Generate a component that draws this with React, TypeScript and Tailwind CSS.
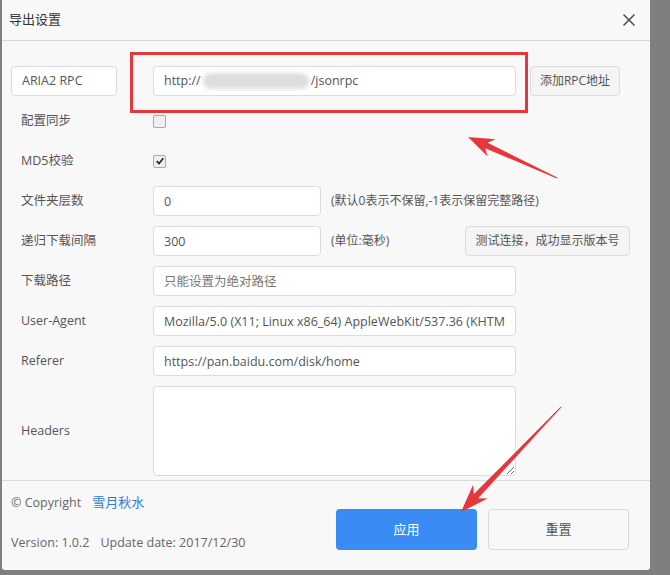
import { X } from 'lucide-react';

type Pt = [number, number];

// tapered arrow polygon: thick head at tip, thin tail
function arrowPoints(tip: Pt, tail: Pt, headLen: number, headW: number, shaftW: number) {
  const dx = tail[0] - tip[0];
  const dy = tail[1] - tip[1];
  const len = Math.hypot(dx, dy);
  const u = [dx / len, dy / len];
  const n = [-u[1], u[0]];
  const at = (d: number, w: number): string =>
    `${(tip[0] + u[0] * d + n[0] * w).toFixed(1)},${(tip[1] + u[1] * d + n[1] * w).toFixed(1)}`;
  return [
    at(0, 0),
    at(headLen, headW / 2),
    at(headLen * 0.78, shaftW / 2),
    at(len, 0.5),
    at(len, -0.5),
    at(headLen * 0.78, -shaftW / 2),
    at(headLen, -headW / 2),
  ].join(' ');
}

const inputCls =
  'h-[30px] rounded-[4px] border border-[#dcdcdc] bg-white px-[10px] text-[12.5px] text-[#555] outline-none';

function Label({ children }: { children: React.ReactNode }) {
  return <div className="w-[142px] shrink-0 pl-[10px] text-[12.5px] text-[#555]">{children}</div>;
}

function Checkbox({ checked }: { checked?: boolean }) {
  return (
    <span className="flex h-[13px] w-[13px] items-center justify-center rounded-[2px] border border-[#aaa] bg-[#f0f0f0]">
      {checked && (
        <svg viewBox="0 0 12 12" className="h-[10px] w-[10px]">
          <path d="M2 6.2 L4.8 9 L10 2.8" fill="none" stroke="#222" strokeWidth="2" />
        </svg>
      )}
    </span>
  );
}

export default function App() {
  return (
    <div className="relative h-[575px] w-[670px] overflow-hidden bg-[#7f7f7f] font-['Open_Sans','Noto_Sans_CJK_SC',sans-serif]">
      <div className="ml-[2px] flex h-[570px] w-[648px] flex-col rounded-b-[3px] bg-[#f8f8f8]">
        {/* Header */}
        <div className="flex h-[41px] shrink-0 items-center justify-between border-b border-[#d8d8d8] pl-[7px] pr-[11px]">
          <span className="text-[13px] text-[#333]">导出设置</span>
          <X className="h-[20px] w-[20px] text-[#555]" strokeWidth={2} />
        </div>

        {/* Form */}
        <div className="flex flex-col gap-[10px] pl-[9px] pr-[20px] pt-[25px]">
          <div className="flex h-[30px] items-center">
            <div className="w-[142px] shrink-0">
              <div className="flex h-[30px] w-[106px] items-center rounded-[4px] border border-[#dcdcdc] bg-white pl-[10px] text-[12.5px] text-[#555]">
                ARIA2 RPC
              </div>
            </div>
            <div className={`${inputCls} flex w-[363px] items-center`}>
              <span>http://</span>
              <span className="mx-[2px] inline-block h-[16px] w-[106px] rounded-full bg-[#dddddd] blur-[2px]" />
              <span>/jsonrpc</span>
            </div>
            <button className="ml-[14px] h-[30px] w-[90px] rounded-[4px] border border-[#dcdcdc] bg-[#f4f4f4] text-[12px] text-[#555]">
              添加RPC地址
            </button>
          </div>

          <div className="flex h-[30px] items-center">
            <Label>配置同步</Label>
            <Checkbox />
          </div>

          <div className="flex h-[30px] items-center">
            <Label>MD5校验</Label>
            <Checkbox checked />
          </div>

          <div className="flex h-[30px] items-center">
            <Label>文件夹层数</Label>
            <input className={`${inputCls} w-[168px]`} defaultValue="0" />
            <span className="ml-[10px] text-[12px] text-[#555]">(默认0表示不保留,-1表示保留完整路径)</span>
          </div>

          <div className="flex h-[30px] items-center">
            <Label>递归下载间隔</Label>
            <input className={`${inputCls} w-[168px]`} defaultValue="300" />
            <span className="ml-[10px] text-[12px] text-[#555]">(单位:毫秒)</span>
            <button className="ml-auto h-[30px] w-[165px] rounded-[4px] border border-[#dcdcdc] bg-[#f4f4f4] text-[12px] text-[#555]">
              测试连接，成功显示版本号
            </button>
          </div>

          <div className="flex h-[30px] items-center">
            <Label>下载路径</Label>
            <input className={`${inputCls} w-[363px] placeholder:text-[#777]`} placeholder="只能设置为绝对路径" />
          </div>

          <div className="flex h-[30px] items-center">
            <Label>User-Agent</Label>
            <input
              className={`${inputCls} w-[363px]`}
              defaultValue="Mozilla/5.0 (X11; Linux x86_64) AppleWebKit/537.36 (KHTML, like Gecko) Chrome/63.0.3239.84 Safari/537.36"
            />
          </div>

          <div className="flex h-[30px] items-center">
            <Label>Referer</Label>
            <input className={`${inputCls} w-[363px]`} defaultValue="https://pan.baidu.com/disk/home" />
          </div>

          <div className="flex h-[90px] items-center">
            <Label>Headers</Label>
            <textarea className="h-[90px] w-[363px] rounded-[4px] border border-[#dcdcdc] bg-white px-[10px] py-[6px] text-[12.5px] text-[#555] outline-none" />
          </div>
        </div>

        {/* Footer */}
        <div className="mt-[4px] flex flex-1 border-t border-[#dcdcdc] pl-[9px]">
          <div className="flex w-[325px] flex-col gap-[20px] pt-[12px] text-[12.5px] text-[#666]">
            <div className="flex h-[20px] items-center">
              <span>© Copyright</span>
              <span className="ml-[11px] text-[13px] text-[#2d7bd2]">雪月秋水</span>
            </div>
            <div className="flex h-[20px] items-center">
              <span>Version: 1.0.2</span>
              <span className="ml-[11px]">Update date: 2017/12/30</span>
            </div>
          </div>
          <div className="flex gap-[11px] pt-[28px]">
            <button className="h-[41px] w-[141px] rounded-[4px] bg-[#3a8cf4] text-[13px] text-white">应用</button>
            <button className="h-[41px] w-[141px] rounded-[4px] border border-[#d8d8d8] bg-[#f8f8f8] text-[13px] text-[#555]">
              重置
            </button>
          </div>
        </div>
      </div>

      {/* Annotations */}
      <div className="absolute left-[130px] top-[52px] h-[61px] w-[398px] border-[3px] border-[#e5383b]" />
      <svg className="pointer-events-none absolute inset-0" width="670" height="575">
        <polygon points={arrowPoints([468, 137], [557, 178], 26, 19, 6)} fill="#e5383b" />
        <polygon points={arrowPoints([461, 512], [561, 407], 28, 20, 6)} fill="#e5383b" />
      </svg>
    </div>
  );
}
